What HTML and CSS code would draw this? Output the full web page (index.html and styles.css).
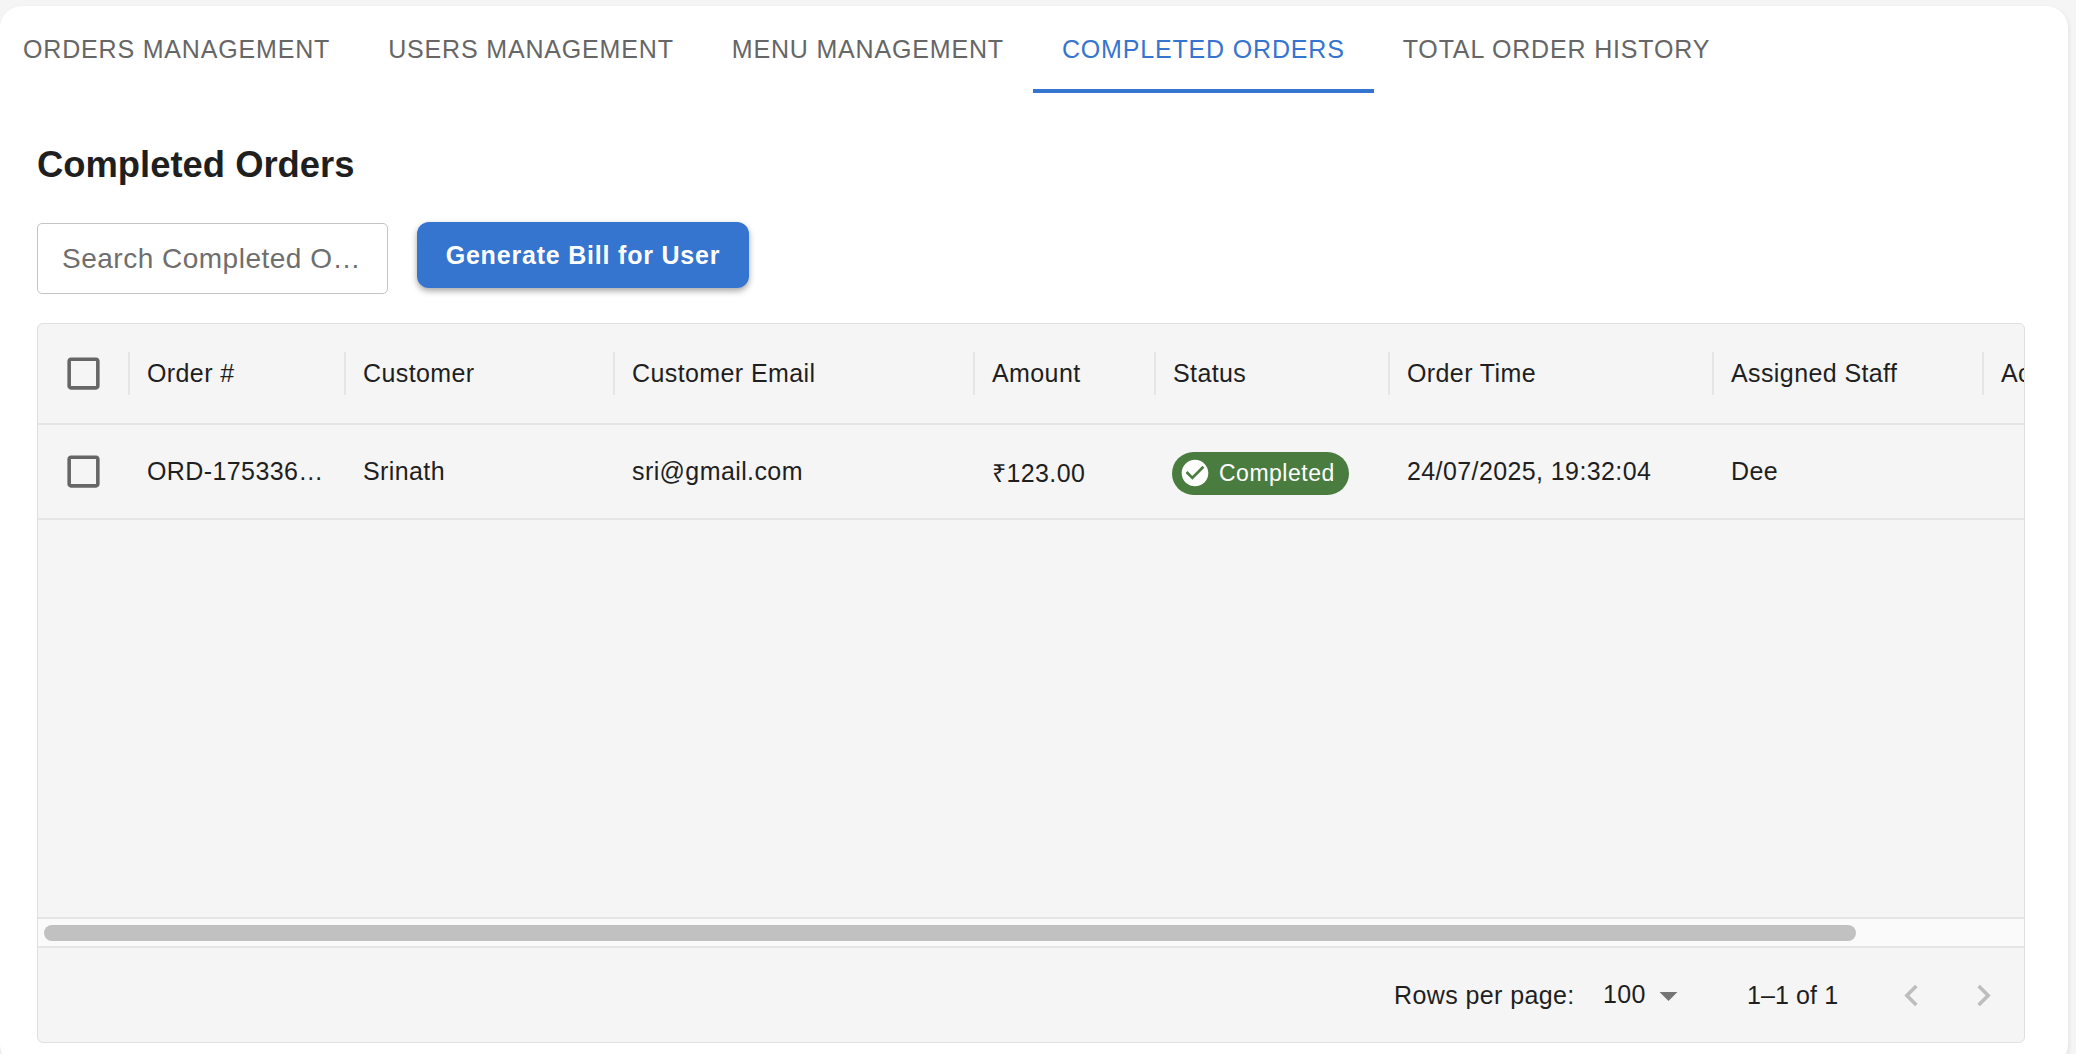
FILE: index.html
```html
<!DOCTYPE html>
<html lang="en">
<head>
    <meta charset="UTF-8">
    <meta name="viewport" content="width=device-width, initial-scale=1.0">
    <title>Completed Orders</title>
    <link rel="stylesheet" href="styles.css">
</head>
<body>
    <div class="card">
        <nav class="tabs">
            <a class="tab">Orders Management</a>
            <a class="tab">Users Management</a>
            <a class="tab">Menu Management</a>
            <a class="tab active">Completed Orders</a>
            <a class="tab">Total Order History</a>
        </nav>

        <section class="panel">
            <h2 class="title">Completed Orders</h2>
            <div class="toolbar">
                <input class="search" type="text" placeholder="Search Completed Orders">
                <button class="bill-btn">Generate Bill for User</button>
            </div>

            <div class="table">
                <div class="table-head">
                    <div class="check-cell">
                        <svg class="checkbox" viewBox="0 0 24 24"><path d="M19 5v14H5V5h14m0-2H5c-1.1 0-2 .9-2 2v14c0 1.1.9 2 2 2h14c1.1 0 2-.9 2-2V5c0-1.1-.9-2-2-2z"/></svg>
                    </div>
                    <div class="head-cell">Order #</div>
                    <div class="head-cell">Customer</div>
                    <div class="head-cell">Customer Email</div>
                    <div class="head-cell">Amount</div>
                    <div class="head-cell">Status</div>
                    <div class="head-cell">Order Time</div>
                    <div class="head-cell">Assigned Staff</div>
                    <div class="head-cell">Actions</div>
                </div>
                <div class="table-row">
                    <div class="check-cell">
                        <svg class="checkbox" viewBox="0 0 24 24"><path d="M19 5v14H5V5h14m0-2H5c-1.1 0-2 .9-2 2v14c0 1.1.9 2 2 2h14c1.1 0 2-.9 2-2V5c0-1.1-.9-2-2-2z"/></svg>
                    </div>
                    <div class="cell">ORD-1753360324</div>
                    <div class="cell">Srinath</div>
                    <div class="cell">sri@gmail.com</div>
                    <div class="cell">₹123.00</div>
                    <div class="cell">
                        <span class="chip">
                            <svg class="chip-icon" viewBox="0 0 24 24"><path d="M12 2C6.48 2 2 6.48 2 12s4.48 10 10 10 10-4.48 10-10S17.52 2 12 2zm-2 15l-5-5 1.41-1.41L10 14.17l7.59-7.59L19 8l-9 9z"/></svg>
                            Completed
                        </span>
                    </div>
                    <div class="cell">24/07/2025, 19:32:04</div>
                    <div class="cell">Dee</div>
                    <div class="cell"></div>
                </div>
                <div class="table-empty"></div>
                <div class="scroll-track"><div class="scroll-thumb"></div></div>
                <div class="table-foot">
                    <span class="rows-label">Rows per page:</span>
                    <span class="rows-value">100</span>
                    <svg class="rows-arrow" viewBox="0 0 24 24"><path d="M7 10l5 5 5-5z"/></svg>
                    <span class="page-info">1–1 of 1</span>
                    <svg class="page-btn prev" viewBox="0 0 24 24"><path d="M15.41 7.41 14 6l-6 6 6 6 1.41-1.41L10.83 12z"/></svg>
                    <svg class="page-btn" viewBox="0 0 24 24"><path d="M10 6 8.59 7.41 13.17 12l-4.58 4.59L10 18l6-6z"/></svg>
                </div>
            </div>
        </section>
    </div>
</body>
</html>
```

FILE: styles.css
```css
/* Page shell */
html, body {
    height: 100%;
}
body {
    margin: 0;
    overflow: hidden;
    background-color: #f5f5f5;
    font-family: "Liberation Sans", Arial, sans-serif;
    color: #1f1f1f;
}
.card {
    width: 2068px;
    height: 1060px;
    margin-top: 6px;
    background-color: #ffffff;
    border-radius: 22px;
    box-shadow: 1px 2px 5px rgba(0, 0, 0, 0.08);
}

/* Tabs */
.tabs {
    display: flex;
    height: 87px;
}
.tab {
    display: flex;
    align-items: flex-start;
    padding: 29px 29px 0;
    box-sizing: border-box;
    height: 87px;
    font-size: 25px;
    line-height: 29px;
    letter-spacing: 0.83px;
    text-transform: uppercase;
    color: #666666;
}
.tab:first-child {
    padding-left: 23px;
}
.tab.active {
    color: #3575cf;
    border-bottom: 4px solid #3575cf;
}

/* Panel */
.panel {
    padding: 0 43px 0 37px;
}
.title {
    margin: 53px 0 0;
    font-size: 36.4px;
    line-height: 38px;
    font-weight: 700;
    color: #1f1f1f;
}
.toolbar {
    display: flex;
    align-items: flex-start;
    gap: 29px;
    margin-top: 38px;
}
.search {
    box-sizing: border-box;
    width: 351px;
    height: 71px;
    margin-top: 1px;
    padding: 0 24px;
    border: 1px solid #c4c4c4;
    border-radius: 5px;
    font-family: inherit;
    font-size: 28px;
    letter-spacing: 0.5px;
    text-overflow: ellipsis;
}
.search::placeholder {
    color: #6e6e6e;
    opacity: 1;
}
.bill-btn {
    width: 332px;
    height: 66px;
    border: none;
    border-radius: 12px;
    background-color: #3575cf;
    color: #ffffff;
    font-family: inherit;
    font-size: 25px;
    font-weight: 700;
    letter-spacing: 0.8px;
    box-shadow: 0 3px 6px rgba(0, 0, 0, 0.35);
}

/* Table */
.table {
    box-sizing: border-box;
    width: 1988px;
    height: 720px;
    margin-top: 29px;
    display: flex;
    flex-direction: column;
    background-color: #f5f5f5;
    border: 1px solid #dfdfdf;
    border-radius: 6px;
    overflow: hidden;
    font-size: 25px;
    letter-spacing: 0.4px;
}
.table-head, .table-row {
    display: grid;
    grid-template-columns: 90px 216px 269px 360px 181px 234px 324px 270px 200px;
    align-items: center;
    flex: none;
    border-bottom: 2px solid #e5e5e5;
}
.table-head {
    height: 99px;
}
.table-row {
    height: 93px;
}
.check-cell {
    display: flex;
    padding-left: 24px;
}
.checkbox {
    width: 43px;
    height: 43px;
    fill: #666666;
}
.head-cell {
    box-sizing: border-box;
    height: 43px;
    line-height: 43px;
    padding-left: 17px;
    border-left: 2px solid #e5e5e5;
    white-space: nowrap;
}
.cell {
    padding: 0 18px 0 19px;
    white-space: nowrap;
    overflow: hidden;
    text-overflow: ellipsis;
}
.chip {
    display: inline-flex;
    align-items: center;
    gap: 8px;
    height: 43px;
    width: 177px;
    margin: 4px 0 0 -1px;
    box-sizing: border-box;
    padding-left: 7px;
    border-radius: 22px;
    background-color: #4a7c3f;
    color: #ffffff;
    font-size: 23px;
    letter-spacing: 0.5px;
}
.chip-icon {
    width: 32px;
    height: 32px;
    fill: #ffffff;
}
.table-empty {
    flex: 1;
}

/* Scrollbar */
.scroll-track {
    flex: none;
    height: 31px;
    padding: 6px 0 0 6px;
    box-sizing: border-box;
    background-color: #fafafa;
    border-top: 2px solid #e5e5e5;
    border-bottom: 2px solid #e5e5e5;
}
.scroll-thumb {
    width: 1812px;
    height: 16px;
    border-radius: 8px;
    background-color: #c1c1c1;
}

/* Pagination */
.table-foot {
    flex: none;
    height: 94px;
    display: flex;
    align-items: center;
    padding-left: 1356px;
}
.rows-label {
    width: 209px;
}
.rows-value {
    width: 44px;
    margin-top: -2px;
}
.rows-arrow {
    width: 43px;
    height: 43px;
    fill: #757575;
    margin-right: 57px;
}
.page-info {
    width: 143px;
    letter-spacing: 0.1px;
}
.page-btn {
    width: 43px;
    height: 43px;
    fill: #bdbdbd;
}
.page-btn.prev {
    margin-right: 29px;
}
```
